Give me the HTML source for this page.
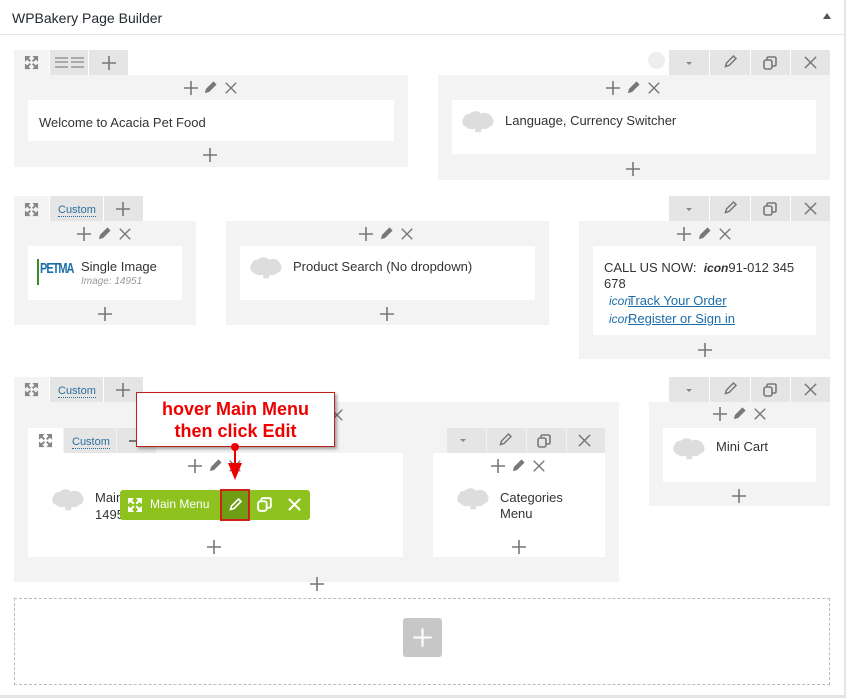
<!DOCTYPE html>
<html><head><meta charset="utf-8"><style>
*{margin:0;padding:0;box-sizing:border-box}
body{width:846px;height:698px;background:#fff;font-family:"Liberation Sans","DejaVu Sans",sans-serif;position:relative;overflow:hidden;color:#333}
.a{position:absolute}
.g{background:#f3f3f3}
.w{background:#fff}
.t{background:#e5e5e5}
.ic{position:absolute;display:block}
.txt{position:absolute;font-size:13px;color:#333;white-space:nowrap}
.cust{position:absolute;font-size:11px;color:#2a6f9b;border-bottom:1px dotted #2a6f9b;line-height:12px}
</style></head><body>
<svg width="0" height="0" style="position:absolute"><defs>
<symbol id="plus" viewBox="0 0 16 16"><path d="M8 1v14M1 8h14" stroke="#777" stroke-width="1.6" fill="none"/></symbol>
<symbol id="pen" viewBox="0 0 16 16"><path d="M2 14l1.2-4.5 8-8 3.3 3.3-8 8z" fill="#777"/></symbol>
<symbol id="penl" viewBox="0 0 16 16"><path d="M3.5 12.5l1-3.5 7-7 2.5 2.5-7 7z" fill="none" stroke="#777" stroke-width="1.5"/></symbol>
<symbol id="x" viewBox="0 0 16 16"><path d="M2 2l12 12M14 2L2 14" stroke="#777" stroke-width="1.6" fill="none"/></symbol>
<symbol id="copy" viewBox="0 0 16 16"><rect x="2" y="5" width="8" height="9" rx="2" fill="none" stroke="#777" stroke-width="1.6"/><path d="M5 5V3.5Q5 2 6.5 2H12.5Q14 2 14 3.5V9.5Q14 11 12.5 11H10" fill="none" stroke="#777" stroke-width="1.6"/></symbol>
<symbol id="exp" viewBox="0 0 16 16"><path d="M1 1h6L5 3.5l2.5 2.5-1.5 1.5-2.5-2.5L1 7zM15 1v6l-2.5-2-2.5 2.5-1.5-1.5 2.5-2.5L9 1zM1 15V9l2.5 2 2.5-2.5 1.5 1.5-2.5 2.5L7 15zM15 15H9l2-2.5-2.5-2.5 1.5-1.5 2.5 2.5L15 9z" fill="#888"/></symbol>
<symbol id="caret" viewBox="0 0 16 16"><path d="M5 7h6l-3 3z" fill="#888"/></symbol>
<symbol id="cloud" viewBox="0 0 36 28"><path d="M8 4c4-4 10-3 12 0 4-2 10-1 12 4 3 3 2 9-3 10-2 3-6 3-8 2l-1 4h-6l0-4c-3 1-8 1-10-2-5-1-5-8-2-10 0-2 2-4 6-4z" fill="#ddd"/></symbol>
</defs></svg>

<div class="txt" style="left:12px;top:10px;font-size:14px;color:#23282d">WPBakery Page Builder</div>
<div class="a" style="left:823px;top:13px;width:0;height:0;border-left:4px solid transparent;border-right:4px solid transparent;border-bottom:6px solid #555"></div>
<div class="a" style="left:0;top:34px;width:846px;height:1px;background:#e5e5e5"></div>
<div class="a" style="left:844px;top:0;width:2px;height:698px;background:#e5e5e5"></div>
<div class="a" style="left:0;top:695px;width:846px;height:3px;background:#e5e5e5"></div>

<!-- ROW 1 -->
<div class="a g" style="left:14px;top:50px;width:35px;height:26px"></div>
<svg class="ic" style="left:24px;top:55px" width="15" height="15"><use href="#exp"/></svg>
<div class="a t" style="left:50px;top:50px;width:38px;height:25px"></div>
<div class="a" style="left:55px;top:57px;width:13px;height:11px;border-top:2px solid #aaa;border-bottom:2px solid #aaa"></div>
<div class="a" style="left:55px;top:61px;width:13px;height:2px;background:#aaa"></div>
<div class="a" style="left:71px;top:57px;width:13px;height:11px;border-top:2px solid #aaa;border-bottom:2px solid #aaa"></div>
<div class="a" style="left:71px;top:61px;width:13px;height:2px;background:#aaa"></div>
<div class="a t" style="left:89px;top:50px;width:39px;height:25px"></div>
<svg class="ic" style="left:101px;top:55px" width="16" height="16"><use href="#plus"/></svg>

<div class="a g" style="left:14px;top:75px;width:394px;height:92px"></div>
<svg class="ic" style="left:183px;top:80px" width="16" height="16"><use href="#plus"/></svg>
<svg class="ic" style="left:203px;top:80px" width="15" height="15"><use href="#pen"/></svg>
<svg class="ic" style="left:224px;top:81px" width="14" height="14"><use href="#x"/></svg>
<div class="a w" style="left:28px;top:100px;width:366px;height:41px"></div>
<div class="txt" style="left:39px;top:115px">Welcome to Acacia Pet Food</div>
<svg class="ic" style="left:202px;top:147px" width="16" height="16"><use href="#plus"/></svg>

<div class="a" style="left:648px;top:52px;width:17px;height:17px;border-radius:50%;background:#eee"></div>
<div class="a t" style="left:669px;top:50px;width:40px;height:25px"></div>
<svg class="ic" style="left:681px;top:55px" width="16" height="16"><use href="#caret"/></svg>
<div class="a t" style="left:710px;top:50px;width:40px;height:25px"></div>
<svg class="ic" style="left:722px;top:54px" width="16" height="16"><use href="#penl"/></svg>
<div class="a t" style="left:751px;top:50px;width:39px;height:25px"></div>
<svg class="ic" style="left:762px;top:55px" width="16" height="16"><use href="#copy"/></svg>
<div class="a t" style="left:791px;top:50px;width:39px;height:25px"></div>
<svg class="ic" style="left:803px;top:55px" width="15" height="15"><use href="#x"/></svg>

<div class="a g" style="left:438px;top:75px;width:392px;height:105px"></div>
<svg class="ic" style="left:605px;top:80px" width="16" height="16"><use href="#plus"/></svg>
<svg class="ic" style="left:626px;top:80px" width="15" height="15"><use href="#pen"/></svg>
<svg class="ic" style="left:647px;top:81px" width="14" height="14"><use href="#x"/></svg>
<div class="a w" style="left:452px;top:100px;width:364px;height:54px"></div>
<svg class="ic" style="left:462px;top:110px" width="34" height="26"><use href="#cloud"/></svg>
<div class="txt" style="left:505px;top:113px">Language, Currency Switcher</div>
<svg class="ic" style="left:625px;top:161px" width="16" height="16"><use href="#plus"/></svg>

<!-- ROW 2 -->
<div class="a g" style="left:14px;top:196px;width:35px;height:26px"></div>
<svg class="ic" style="left:24px;top:202px" width="15" height="15"><use href="#exp"/></svg>
<div class="a t" style="left:50px;top:196px;width:53px;height:25px"></div>
<div class="cust" style="left:58px;top:204px">Custom</div>
<div class="a t" style="left:104px;top:196px;width:39px;height:25px"></div>
<svg class="ic" style="left:115px;top:201px" width="16" height="16"><use href="#plus"/></svg>

<div class="a g" style="left:14px;top:221px;width:182px;height:104px"></div>
<svg class="ic" style="left:76px;top:226px" width="16" height="16"><use href="#plus"/></svg>
<svg class="ic" style="left:97px;top:226px" width="15" height="15"><use href="#pen"/></svg>
<svg class="ic" style="left:118px;top:227px" width="14" height="14"><use href="#x"/></svg>
<div class="a w" style="left:28px;top:246px;width:154px;height:54px"></div>
<div class="a" style="left:37px;top:259px;width:2px;height:26px;background:#3a8a2a"></div>
<div class="txt" style="left:40px;top:263px;font-size:11px;font-weight:bold;color:#1d6ea8;letter-spacing:-1px;transform:scaleY(1.3)">PETMA</div>
<div class="txt" style="left:81px;top:259px">Single Image</div>
<div class="txt" style="left:81px;top:276px;font-size:10px;font-style:italic;color:#999">Image: 14951</div>
<svg class="ic" style="left:97px;top:306px" width="16" height="16"><use href="#plus"/></svg>

<div class="a g" style="left:226px;top:221px;width:323px;height:104px"></div>
<svg class="ic" style="left:358px;top:226px" width="16" height="16"><use href="#plus"/></svg>
<svg class="ic" style="left:379px;top:226px" width="15" height="15"><use href="#pen"/></svg>
<svg class="ic" style="left:400px;top:227px" width="14" height="14"><use href="#x"/></svg>
<div class="a w" style="left:240px;top:246px;width:295px;height:54px"></div>
<svg class="ic" style="left:250px;top:256px" width="34" height="26"><use href="#cloud"/></svg>
<div class="txt" style="left:293px;top:259px">Product Search (No dropdown)</div>
<svg class="ic" style="left:379px;top:306px" width="16" height="16"><use href="#plus"/></svg>

<div class="a t" style="left:669px;top:196px;width:40px;height:25px"></div>
<svg class="ic" style="left:681px;top:201px" width="16" height="16"><use href="#caret"/></svg>
<div class="a t" style="left:710px;top:196px;width:40px;height:25px"></div>
<svg class="ic" style="left:722px;top:200px" width="16" height="16"><use href="#penl"/></svg>
<div class="a t" style="left:751px;top:196px;width:39px;height:25px"></div>
<svg class="ic" style="left:762px;top:201px" width="16" height="16"><use href="#copy"/></svg>
<div class="a t" style="left:791px;top:196px;width:39px;height:25px"></div>
<svg class="ic" style="left:803px;top:201px" width="15" height="15"><use href="#x"/></svg>

<div class="a g" style="left:579px;top:221px;width:251px;height:138px"></div>
<svg class="ic" style="left:676px;top:226px" width="16" height="16"><use href="#plus"/></svg>
<svg class="ic" style="left:697px;top:226px" width="15" height="15"><use href="#pen"/></svg>
<svg class="ic" style="left:718px;top:227px" width="14" height="14"><use href="#x"/></svg>
<div class="a w" style="left:593px;top:246px;width:223px;height:89px"></div>
<div class="txt" style="left:604px;top:260px">CALL US NOW: &nbsp;<b style="font-style:italic;font-size:12px">icon</b>91-012 345</div>
<div class="txt" style="left:604px;top:276px">678</div>
<div class="txt" style="left:609px;top:293px;color:#1d6ea8"><i style="font-size:12px">icon</i><u style="margin-left:-3px">Track Your Order</u></div>
<div class="txt" style="left:609px;top:311px;color:#1d6ea8"><i style="font-size:12px">icon</i><u style="margin-left:-3px">Register or Sign in</u></div>
<svg class="ic" style="left:697px;top:342px" width="16" height="16"><use href="#plus"/></svg>

<!-- ROW 3 -->
<div class="a g" style="left:14px;top:377px;width:35px;height:26px"></div>
<svg class="ic" style="left:24px;top:382px" width="15" height="15"><use href="#exp"/></svg>
<div class="a t" style="left:50px;top:377px;width:53px;height:25px"></div>
<div class="cust" style="left:58px;top:385px">Custom</div>
<div class="a t" style="left:104px;top:377px;width:39px;height:25px"></div>
<svg class="ic" style="left:115px;top:382px" width="16" height="16"><use href="#plus"/></svg>

<div class="a g" style="left:14px;top:402px;width:605px;height:180px"></div>
<svg class="ic" style="left:330px;top:408px" width="14" height="14"><use href="#x"/></svg>
<div class="a w" style="left:28px;top:428px;width:35px;height:26px"></div>
<svg class="ic" style="left:38px;top:433px" width="15" height="15"><use href="#exp"/></svg>
<div class="a t" style="left:64px;top:428px;width:52px;height:25px"></div>
<div class="cust" style="left:72px;top:436px">Custom</div>
<div class="a t" style="left:117px;top:428px;width:39px;height:25px"></div>
<div class="a" style="left:129px;top:440px;width:14px;height:2px;background:#777"></div>
<div class="a w" style="left:28px;top:453px;width:375px;height:104px"></div>
<svg class="ic" style="left:187px;top:458px" width="16" height="16"><use href="#plus"/></svg>
<svg class="ic" style="left:208px;top:458px" width="15" height="15"><use href="#pen"/></svg>
<svg class="ic" style="left:228px;top:459px" width="14" height="14"><use href="#x"/></svg>
<svg class="ic" style="left:52px;top:488px" width="34" height="26"><use href="#cloud"/></svg>
<div class="txt" style="left:95px;top:490px">Main</div>
<div class="txt" style="left:95px;top:507px">14951</div>
<svg class="ic" style="left:206px;top:539px" width="16" height="16"><use href="#plus"/></svg>
<svg class="ic" style="left:309px;top:576px" width="16" height="16"><use href="#plus"/></svg>

<div class="a t" style="left:447px;top:428px;width:39px;height:25px"></div>
<svg class="ic" style="left:455px;top:432px" width="16" height="16"><use href="#caret"/></svg>
<div class="a t" style="left:487px;top:428px;width:39px;height:25px"></div>
<svg class="ic" style="left:497px;top:432px" width="16" height="16"><use href="#penl"/></svg>
<div class="a t" style="left:527px;top:428px;width:39px;height:25px"></div>
<svg class="ic" style="left:536px;top:433px" width="16" height="16"><use href="#copy"/></svg>
<div class="a t" style="left:567px;top:428px;width:38px;height:25px"></div>
<svg class="ic" style="left:577px;top:433px" width="15" height="15"><use href="#x"/></svg>
<div class="a w" style="left:433px;top:453px;width:172px;height:104px"></div>
<svg class="ic" style="left:490px;top:458px" width="16" height="16"><use href="#plus"/></svg>
<svg class="ic" style="left:511px;top:458px" width="15" height="15"><use href="#pen"/></svg>
<svg class="ic" style="left:532px;top:459px" width="14" height="14"><use href="#x"/></svg>
<svg class="ic" style="left:457px;top:487px" width="34" height="26"><use href="#cloud"/></svg>
<div class="txt" style="left:500px;top:490px">Categories</div>
<div class="txt" style="left:500px;top:506px">Menu</div>
<svg class="ic" style="left:511px;top:539px" width="16" height="16"><use href="#plus"/></svg>

<div class="a t" style="left:669px;top:377px;width:40px;height:25px"></div>
<svg class="ic" style="left:681px;top:382px" width="16" height="16"><use href="#caret"/></svg>
<div class="a t" style="left:710px;top:377px;width:40px;height:25px"></div>
<svg class="ic" style="left:722px;top:381px" width="16" height="16"><use href="#penl"/></svg>
<div class="a t" style="left:751px;top:377px;width:39px;height:25px"></div>
<svg class="ic" style="left:762px;top:382px" width="16" height="16"><use href="#copy"/></svg>
<div class="a t" style="left:791px;top:377px;width:39px;height:25px"></div>
<svg class="ic" style="left:803px;top:382px" width="15" height="15"><use href="#x"/></svg>
<div class="a g" style="left:649px;top:402px;width:181px;height:104px"></div>
<svg class="ic" style="left:712px;top:406px" width="16" height="16"><use href="#plus"/></svg>
<svg class="ic" style="left:732px;top:406px" width="15" height="15"><use href="#pen"/></svg>
<svg class="ic" style="left:753px;top:407px" width="14" height="14"><use href="#x"/></svg>
<div class="a w" style="left:663px;top:428px;width:153px;height:54px"></div>
<svg class="ic" style="left:673px;top:437px" width="34" height="26"><use href="#cloud"/></svg>
<div class="txt" style="left:716px;top:439px">Mini Cart</div>
<svg class="ic" style="left:731px;top:488px" width="16" height="16"><use href="#plus"/></svg>

<!-- green bar -->
<div class="a" style="left:120px;top:490px;width:190px;height:30px;background:#8dc21f;border-radius:3px"></div>
<svg class="ic" style="left:127px;top:497px" width="16" height="16" viewBox="0 0 16 16"><path d="M1 1h6L5 3.5l2.5 2.5-1.5 1.5-2.5-2.5L1 7zM15 1v6l-2.5-2-2.5 2.5-1.5-1.5 2.5-2.5L9 1zM1 15V9l2.5 2 2.5-2.5 1.5 1.5-2.5 2.5L7 15zM15 15H9l2-2.5-2.5-2.5 1.5-1.5 2.5 2.5L15 9z" fill="#fff"/></svg>
<div class="txt" style="left:150px;top:497px;font-size:12px;color:#fff">Main Menu</div>
<div class="a" style="left:220px;top:489px;width:30px;height:32px;background:#6f9e14;border:2px solid #d0201a"></div>
<svg class="ic" style="left:227px;top:497px" width="16" height="16" viewBox="0 0 16 16"><path d="M3.5 12.5l1-3.5 7-7 2.5 2.5-7 7z" fill="none" stroke="#fff" stroke-width="1.6"/></svg>
<svg class="ic" style="left:256px;top:496px" width="17" height="17" viewBox="0 0 16 16"><rect x="2" y="5" width="8" height="9" rx="2" fill="none" stroke="#fff" stroke-width="1.8"/><path d="M5 5V3.5Q5 2 6.5 2H12.5Q14 2 14 3.5V9.5Q14 11 12.5 11H10" fill="none" stroke="#fff" stroke-width="1.8"/></svg>
<svg class="ic" style="left:287px;top:497px" width="15" height="15" viewBox="0 0 16 16"><path d="M2 2l12 12M14 2L2 14" stroke="#fff" stroke-width="2.2"/></svg>

<!-- callout -->
<div class="a" style="left:136px;top:392px;width:199px;height:55px;background:#fff;border:1px solid #c0201a;box-shadow:2px 2px 3px rgba(0,0,0,.35)"></div>
<div class="txt" style="left:136px;top:398px;width:199px;text-align:center;font-size:18px;font-weight:bold;color:#e00;line-height:22px">hover Main Menu<br>then click Edit</div>
<div class="a" style="left:231px;top:443px;width:8px;height:8px;border-radius:50%;background:#e00"></div>
<div class="a" style="left:234px;top:449px;width:2px;height:16px;background:#e00"></div>
<div class="a" style="left:228px;top:463px;width:0;height:0;border-left:7px solid transparent;border-right:7px solid transparent;border-top:17px solid #e00"></div>

<!-- bottom -->
<div class="a" style="left:14px;top:598px;width:816px;height:87px;border:1px dashed #bbb"></div>
<div class="a" style="left:403px;top:618px;width:39px;height:39px;background:#c7c7c7;border-radius:3px"></div>
<svg class="ic" style="left:412px;top:627px" width="21" height="21" viewBox="0 0 16 16"><path d="M8 1v14M1 8h14" stroke="#fff" stroke-width="1.6"/></svg>
</body></html>
